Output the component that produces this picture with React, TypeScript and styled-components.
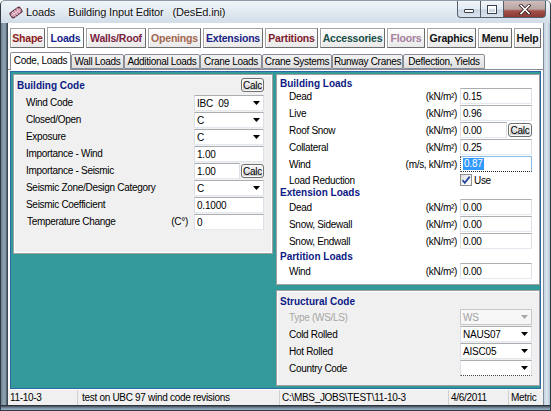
import React from "react";
import styled, { createGlobalStyle } from "styled-components";

const GlobalStyle = createGlobalStyle`
  html, body { margin: 0; padding: 0; }
  body {
    background: #ffffff;
    font-family: "Liberation Sans", Arial, sans-serif;
    font-size: 10px;
    color: #000;
  }
  *, *::before, *::after { box-sizing: border-box; }
`;

const Window = styled.div`
  width: 551px;
  height: 411px;
  display: flex;
  flex-direction: column;
  overflow: hidden;
  border: 1px solid #2e3a46;
  border-top-color: #8d99a6;
  border-radius: 5px 5px 0 0;
  background: #9fb4c6;
`;

const TitleBar = styled.div`
  height: 22px;
  flex: none;
  display: flex;
  align-items: flex-start;
  padding: 0 4px 0 8px;
  background: linear-gradient(180deg, #f1f5f9 0%, #e0e8f0 55%, #d2dde8 100%);
`;

const TitleGroup = styled.div`
  height: 22px;
  display: flex;
  align-items: center;
`;

const TitleText = styled.span<{ $ml: number }>`
  margin-left: ${(p) => p.$ml}px;
  font-size: 11px;
  letter-spacing: -0.15px;
  color: #111;
  white-space: nowrap;
  text-shadow: 0 0 3px #fff;
`;

const WinButtons = styled.div`
  margin-left: auto;
  display: flex;
  height: 17px;
`;

const WinButton = styled.div<{ $w: number; $close?: boolean }>`
  width: ${(p) => p.$w}px;
  height: 17px;
  margin-left: -1px;
  display: flex;
  align-items: center;
  justify-content: center;
  border: 1px solid #55606c;
  border-top: none;
  border-radius: ${(p) => (p.$close ? "0 0 4px 0" : "0")};
  background: ${(p) =>
    p.$close
      ? "linear-gradient(180deg, #cdbdbb 0%, #b9a7a5 50%, #a4504a 62%, #8a3a34 100%)"
      : "linear-gradient(180deg, #f3f6fa 0%, #e3eaf2 50%, #c9d5e3 55%, #d9e3ee 100%)"};
  &:first-child { border-radius: 0 0 0 4px; margin-left: 0; }
`;

const ClientRow = styled.div`
  flex: 1;
  display: flex;
  min-height: 0;
`;

const SideGlass = styled.div<{ $right?: boolean }>`
  width: 7px;
  flex: none;
  background: ${(p) =>
    p.$right
      ? "linear-gradient(90deg, #3b4651 0px, #c4d3e0 1px, #dbe6ef 4px, #b0c2d2 7px)"
      : "linear-gradient(90deg, #6b7f8c 0px, #8ea5b3 3px, #7b909d 5px, #3a454f 6px, #3a454f 7px)"};
`;

const Client = styled.div`
  width: 535px;
  display: flex;
  flex-direction: column;
  background: #ffffff;
`;

const MainTabs = styled.div`
  height: 27px;
  flex: none;
  display: flex;
  align-items: flex-end;
  gap: 2px;
  padding: 0 0 2px 2px;
`;

const MainTab = styled.div<{ $w: number; $color: string; $active?: boolean }>`
  width: ${(p) => p.$w}px;
  height: ${(p) => (p.$active ? 21 : 20)}px;
  display: flex;
  align-items: center;
  justify-content: center;
  border: 1px solid;
  border-color: #a4a4a4 #6c6c6c #6c6c6c #a4a4a4;
  box-shadow: inset 1px 1px 0 #ffffff;
  background: ${(p) => (p.$active ? "#ffffff" : "linear-gradient(180deg, #fdfdfd 0%, #f1f1f1 60%, #e9e9e9 100%)")};
  color: ${(p) => p.$color};
  font-weight: bold;
  font-size: 10.5px;
  letter-spacing: -0.2px;
  white-space: nowrap;
`;

const SubTabs = styled.div`
  height: 19px;
  flex: none;
  display: flex;
  align-items: flex-end;
  padding-left: 2px;
`;

const SubTab = styled.div<{ $w: number; $active?: boolean }>`
  width: ${(p) => p.$w}px;
  height: ${(p) => (p.$active ? 18 : 15)}px;
  margin-bottom: ${(p) => (p.$active ? -1 : 0)}px;
  position: relative;
  z-index: ${(p) => (p.$active ? 1 : 0)};
  display: flex;
  align-items: center;
  justify-content: center;
  border: 1px solid #898c95;
  border-bottom: ${(p) => (p.$active ? "none" : "1px solid #898c95")};
  border-radius: 2px 2px 0 0;
  background: ${(p) => (p.$active ? "#ffffff" : "linear-gradient(180deg, #f4f4f4 0%, #e9e9e9 50%, #dedede 100%)")};
  font-size: 10px;
  letter-spacing: -0.3px;
  white-space: nowrap;
  padding-bottom: ${(p) => (p.$active ? 2 : 0)}px;
`;

const TabPage = styled.div`
  flex: 1;
  display: flex;
  flex-direction: column;
  border-top: 1px solid #898c95;
  padding: 1px 2px 1px 2px;
  min-height: 0;
`;

const Teal = styled.div`
  flex: 1;
  display: grid;
  grid-template-columns: 260px 264px;
  column-gap: 3px;
  align-content: start;
  padding: 2px;
  border: 1px solid #2c68a3;
  background: #339999;
`;

const LeftPanel = styled.div`
  height: 180px;
  display: flex;
  flex-direction: column;
  padding: 3px 8px 0 3px;
  background: #f0f0f0;
  border: 1px solid #a0a0a0;
  box-shadow: inset 1px 1px 0 #ffffff, inset -1px -1px 0 #ffffff;
`;

const RightCol = styled.div`
  display: flex;
  flex-direction: column;
  gap: 5px;
`;

const LoadsPanel = styled.div`
  height: 211px;
  display: flex;
  flex-direction: column;
  padding: 4px 7px 0 3px;
  background: #ffffff;
  border: 1px solid #a0a0a0;
  overflow: hidden;
`;

const StructPanel = styled.div`
  height: 96px;
  display: flex;
  flex-direction: column;
  padding: 4px 7px 0 3px;
  background: #f0f0f0;
  border: 1px solid #a0a0a0;
  box-shadow: inset 1px 1px 0 #ffffff;
`;

const HeadingRow = styled.div<{ $h: number }>`
  height: ${(p) => p.$h}px;
  flex: none;
  display: flex;
  align-items: ${(p) => (p.$h >= 16 ? "flex-start" : "center")};
  justify-content: space-between;
`;

const Heading = styled.span<{ $lh: number }>`
  line-height: ${(p) => p.$lh}px;
  font-weight: bold;
  font-size: 10px;
  color: #0d1a85;
  white-space: nowrap;
`;

const TightHeading = styled.div`
  height: 10px;
  margin-bottom: -1px;
  flex: none;
  display: flex;
  align-items: center;
`;

const FieldRow = styled.div<{ $cols: string; $gap: number; $h?: number }>`
  height: ${(p) => p.$h ?? 17}px;
  flex: none;
  display: grid;
  grid-template-columns: ${(p) => p.$cols};
  column-gap: ${(p) => p.$gap}px;
  align-items: center;
  padding-left: 9px;
`;

const Label = styled.span<{ $disabled?: boolean; $shift?: number }>`
  padding-left: ${(p) => p.$shift ?? 0}px;
  font-size: 10px;
  letter-spacing: -0.3px;
  color: ${(p) => (p.$disabled ? "#a6a6a6" : "#000")};
  white-space: nowrap;
`;

const Unit = styled.span`
  font-size: 10px;
  letter-spacing: -0.3px;
  white-space: nowrap;
  text-align: right;
`;

const Cell = styled.div<{ $align: "start" | "end" }>`
  align-self: ${(p) => p.$align};
  display: flex;
  gap: 1px;
  align-items: center;
`;

const Box = styled.div<{ $focus?: boolean; $disabled?: boolean; $dotted?: boolean }>`
  flex: 1;
  height: 16px;
  display: flex;
  align-items: center;
  justify-content: space-between;
  padding: 0 3px 0 2px;
  border: 1px solid;
  border-color: ${(p) =>
    p.$focus ? "#8dbbe9" : p.$disabled ? "#c8c8c8" : "#abadb3 #dcdfe5 #e3e9ef #dcdfe5"};
  ${(p) => (p.$focus ? "border-bottom: 1px dotted #222; border-left: 1px dotted #444;" : "")}
  ${(p) => (p.$dotted ? "border-bottom: 1px dotted #444;" : "")}
  background: ${(p) => (p.$disabled ? "#f7f7f7" : "#ffffff")};
  color: ${(p) => (p.$disabled ? "#a0a0a0" : "#000")};
  font-size: 10px;
  letter-spacing: -0.2px;
  white-space: pre;
`;

const Selected = styled.span`
  background: #3399ff;
  color: #ffffff;
  padding: 0 1px;
  line-height: 12px;
`;

const CalcButton = styled.div<{ $w: number }>`
  width: ${(p) => p.$w}px;
  height: 14px;
  flex: none;
  display: flex;
  align-items: center;
  justify-content: center;
  border: 1px solid #707070;
  border-radius: 3px;
  background: linear-gradient(180deg, #f4f4f4 0%, #ececec 48%, #dddddd 52%, #d0d0d0 100%);
  box-shadow: inset 0 0 0 1px #fcfcfc;
  font-size: 10px;
  letter-spacing: -0.3px;
`;

const CheckWrap = styled.div`
  display: flex;
  align-items: center;
  gap: 2px;
`;

const CheckBox = styled.div`
  width: 12px;
  height: 12px;
  display: flex;
  align-items: center;
  justify-content: center;
  border: 1px solid #8f8f8f;
  background: linear-gradient(135deg, #dedede 0%, #f6f6f6 60%, #ffffff 100%);
`;

const StatusBar = styled.div`
  height: 15px;
  flex: none;
  display: flex;
  background: #f0f0f0;
`;

const StatusCell = styled.div<{ $w?: number; $pad: number }>`
  ${(p) => (p.$w ? `width: ${p.$w}px; flex: none;` : "flex: 1;")}
  padding-left: ${(p) => p.$pad}px;
  line-height: 15px;
  font-size: 10px;
  letter-spacing: -0.3px;
  white-space: nowrap;
  overflow: hidden;
  & + & { border-left: 1px solid #cfcfcf; }
`;

const BottomGlass = styled.div`
  height: 5px;
  flex: none;
  background: linear-gradient(180deg, #1e1e1e 0px, #3f4a55 1px, #7890a4 3px, #9fb5c8 5px);
`;

/* ---------- icons ---------- */

const AppIcon = () => (
  <svg width="14" height="13" viewBox="0 0 14 13">
    <g transform="rotate(-35 7 6.5)">
      <rect x="1" y="3.5" width="12" height="6" rx="1.5" fill="#c98ba1" stroke="#4d2331" strokeWidth="1" />
      <path d="M4.2 3.5v6M7 3.5v6M9.8 3.5v6M1 6.5h12" stroke="#f3d6e0" strokeWidth="0.8" />
    </g>
  </svg>
);

const MinGlyph = () => (
  <svg width="12" height="10" viewBox="0 0 12 10">
    <rect x="1.5" y="5.5" width="9" height="3" rx="0.5" fill="#ffffff" stroke="#38414c" />
  </svg>
);

const MaxGlyph = () => (
  <svg width="12" height="11" viewBox="0 0 12 11">
    <rect x="1.5" y="1.5" width="9" height="8" fill="none" stroke="#38414c" strokeWidth="1" />
    <rect x="2.5" y="2.5" width="7" height="6" fill="none" stroke="#ffffff" strokeWidth="1" />
    <rect x="2.5" y="2.5" width="7" height="2" fill="#ffffff" />
  </svg>
);

const CloseGlyph = () => (
  <svg width="14" height="11" viewBox="0 0 14 11">
    <path d="M3 1.5l8 8M11 1.5l-8 8" stroke="#3a2020" strokeWidth="3.2" strokeLinecap="square" />
    <path d="M3 1.5l8 8M11 1.5l-8 8" stroke="#ffffff" strokeWidth="1.6" strokeLinecap="square" />
  </svg>
);

const Arrow = ({ color = "#000" }: { color?: string }) => (
  <svg width="7" height="4" viewBox="0 0 7 4">
    <path d="M0 0h7L3.5 4z" fill={color} />
  </svg>
);

const Check = () => (
  <svg width="10" height="10" viewBox="0 0 10 10">
    <path d="M1.5 5.2l2.3 2.6L8.7 1.6" fill="none" stroke="#2a4a9a" strokeWidth="1.8" />
  </svg>
);

/* ---------- data ---------- */

const mainTabs = [
  { label: "Shape", color: "#8b1c1c", w: 35 },
  { label: "Loads", color: "#14238a", w: 37, active: true },
  { label: "Walls/Roof", color: "#7a1f3f", w: 60 },
  { label: "Openings", color: "#a3674f", w: 53 },
  { label: "Extensions", color: "#1b2488", w: 60 },
  { label: "Partitions", color: "#7d1c2c", w: 53 },
  { label: "Accessories", color: "#184f48", w: 65 },
  { label: "Floors", color: "#a5809c", w: 38 },
  { label: "Graphics", color: "#111111", w: 49 },
  { label: "Menu", color: "#111111", w: 34 },
  { label: "Help", color: "#111111", w: 27 },
];

const subTabs = [
  { label: "Code, Loads", w: 61, active: true },
  { label: "Wall Loads", w: 53 },
  { label: "Additional Loads", w: 76 },
  { label: "Crane Loads", w: 62 },
  { label: "Crane Systems", w: 70 },
  { label: "Runway Cranes", w: 71 },
  { label: "Deflection, Yields", w: 82 },
];

type Field = {
  label: string;
  value: string;
  combo?: boolean;
  calc?: boolean;
  unit?: string;
  focus?: boolean;
  disabled?: boolean;
  dotted?: boolean;
  shift?: number;
};

const codeFields: Field[] = [
  { label: "Wind Code", value: "IBC  09", combo: true },
  { label: "Closed/Open", value: "C", combo: true },
  { label: "Exposure", value: "C", combo: true },
  { label: "Importance - Wind", value: "1.00" },
  { label: "Importance - Seismic", value: "1.00", calc: true },
  { label: "Seismic Zone/Design Category", value: "C", combo: true },
  { label: "Seismic Coefficient", value: "0.1000" },
  { label: "Temperature Change", value: "0", unit: "(C°)", shift: 1 },
];

const KN = "(kN/m²)";

const buildingLoads: Field[] = [
  { label: "Dead", value: "0.15", unit: KN },
  { label: "Live", value: "0.96", unit: KN },
  { label: "Roof Snow", value: "0.00", unit: KN, calc: true },
  { label: "Collateral", value: "0.25", unit: KN },
  { label: "Wind", value: "0.87", unit: "(m/s, kN/m²)", focus: true },
];

const extensionLoads: Field[] = [
  { label: "Dead", value: "0.00", unit: KN },
  { label: "Snow, Sidewall", value: "0.00", unit: KN },
  { label: "Snow, Endwall", value: "0.00", unit: KN },
];

const partitionLoads: Field[] = [{ label: "Wind", value: "0.00", unit: KN }];

const structFields: Field[] = [
  { label: "Type (WS/LS)", value: "WS", combo: true, disabled: true },
  { label: "Cold Rolled", value: "NAUS07", combo: true },
  { label: "Hot Rolled", value: "AISC05", combo: true },
  { label: "Country Code", value: "", combo: true, dotted: true },
];

/* ---------- parts ---------- */

const ValueBox = ({ f }: { f: Field }) => (
  <Box $focus={f.focus} $disabled={f.disabled} $dotted={f.dotted}>
    {f.focus ? <Selected>{f.value}</Selected> : <span>{f.value}</span>}
    {f.combo && <Arrow color={f.disabled ? "#a8a8a8" : "#000"} />}
  </Box>
);

const FieldLine = ({
  f,
  cols,
  gap,
  calcW,
  align,
}: {
  f: Field;
  cols: string;
  gap: number;
  calcW: number;
  align: "start" | "end";
}) => (
  <FieldRow $cols={cols} $gap={gap}>
    <Label $disabled={f.disabled} $shift={f.shift}>
      {f.label}
    </Label>
    <Unit>{f.unit ?? ""}</Unit>
    <Cell $align={align}>
      <ValueBox f={f} />
      {f.calc && <CalcButton $w={calcW}>Calc</CalcButton>}
    </Cell>
  </FieldRow>
);

const RIGHT_COLS = "1fr auto 72px";
const LEFT_COLS = "1fr auto 70px";

export default function App() {
  return (
    <>
      <GlobalStyle />
      <Window>
        <TitleBar>
          <TitleGroup>
            <AppIcon />
            <TitleText $ml={3}>Loads</TitleText>
            <TitleText $ml={13}>Building Input Editor</TitleText>
            <TitleText $ml={9}>(DesEd.ini)</TitleText>
          </TitleGroup>
          <WinButtons>
            <WinButton $w={24}>
              <MinGlyph />
            </WinButton>
            <WinButton $w={24}>
              <MaxGlyph />
            </WinButton>
            <WinButton $w={43} $close>
              <CloseGlyph />
            </WinButton>
          </WinButtons>
        </TitleBar>

        <ClientRow>
          <SideGlass />
          <Client>
            <MainTabs>
              {mainTabs.map((t) => (
                <MainTab key={t.label} $w={t.w} $color={t.color} $active={t.active}>
                  {t.label}
                </MainTab>
              ))}
            </MainTabs>

            <SubTabs>
              {subTabs.map((t) => (
                <SubTab key={t.label} $w={t.w} $active={t.active}>
                  {t.label}
                </SubTab>
              ))}
            </SubTabs>

            <TabPage>
              <Teal>
                <LeftPanel>
                  <HeadingRow $h={16}>
                    <Heading $lh={16}>Building Code</Heading>
                    <CalcButton $w={23}>Calc</CalcButton>
                  </HeadingRow>
                  {codeFields.map((f) => (
                    <FieldLine key={f.label} f={f} cols={LEFT_COLS} gap={6} calcW={23} align="end" />
                  ))}
                </LeftPanel>

                <RightCol>
                  <LoadsPanel>
                    <TightHeading>
                      <Heading $lh={10}>Building Loads</Heading>
                    </TightHeading>
                    {buildingLoads.map((f) => (
                      <FieldLine key={f.label} f={f} cols={RIGHT_COLS} gap={3} calcW={24} align="start" />
                    ))}
                    <FieldRow $cols={RIGHT_COLS} $gap={3} $h={14}>
                      <Label>Load Reduction</Label>
                      <Unit />
                      <CheckWrap>
                        <CheckBox>
                          <Check />
                        </CheckBox>
                        <Label>Use</Label>
                      </CheckWrap>
                    </FieldRow>
                    <HeadingRow $h={12}>
                      <Heading $lh={12}>Extension Loads</Heading>
                    </HeadingRow>
                    {extensionLoads.map((f) => (
                      <FieldLine key={f.label} f={f} cols={RIGHT_COLS} gap={3} calcW={24} align="start" />
                    ))}
                    <HeadingRow $h={13}>
                      <Heading $lh={13}>Partition Loads</Heading>
                    </HeadingRow>
                    {partitionLoads.map((f) => (
                      <FieldLine key={f.label} f={f} cols={RIGHT_COLS} gap={3} calcW={24} align="start" />
                    ))}
                  </LoadsPanel>

                  <StructPanel>
                    <HeadingRow $h={14}>
                      <Heading $lh={14}>Structural Code</Heading>
                    </HeadingRow>
                    {structFields.map((f) => (
                      <FieldLine key={f.label} f={f} cols={RIGHT_COLS} gap={3} calcW={24} align="start" />
                    ))}
                  </StructPanel>
                </RightCol>
              </Teal>
            </TabPage>

            <StatusBar>
              <StatusCell $w={69} $pad={2}>11-10-3</StatusCell>
              <StatusCell $w={202} $pad={4}>test on UBC 97 wind code revisions</StatusCell>
              <StatusCell $w={169} $pad={2}>C:\MBS_JOBS\TEST\11-10-3</StatusCell>
              <StatusCell $w={60} $pad={2}>4/6/2011</StatusCell>
              <StatusCell $pad={2}>Metric</StatusCell>
            </StatusBar>
          </Client>
          <SideGlass $right />
        </ClientRow>
        <BottomGlass />
      </Window>
    </>
  );
}
